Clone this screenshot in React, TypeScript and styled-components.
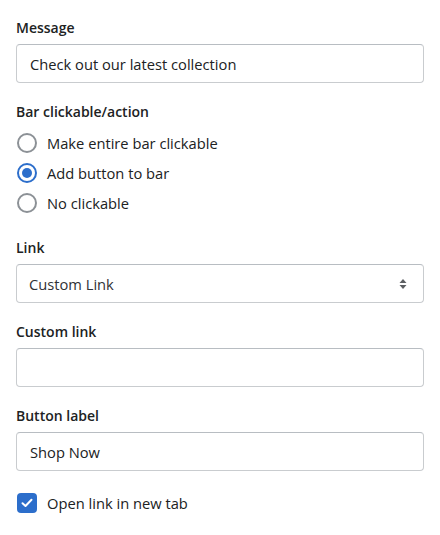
import { createGlobalStyle, styled } from 'styled-components';

const GlobalStyle = createGlobalStyle`
  body {
    margin: 0;
    background: #ffffff;
    font-family: 'Open Sans', 'Noto Sans', sans-serif;
    color: #202223;
  }
  * {
    box-sizing: border-box;
  }
`;

const radioOptions = ['Make entire bar clickable', 'Add button to bar', 'No clickable'];

const App = () => {
  return (
    <>
      <GlobalStyle />
      <Form>
        <Field>
          <Label>Message</Label>
          <TextInput type="text" defaultValue="Check out our latest collection" />
        </Field>

        <Field>
          <Label>Bar clickable/action</Label>
          <RadioList>
            {radioOptions.map((option, i) => (
              <RadioRow key={option}>
                <RadioCircle $checked={i === 1} />
                <span>{option}</span>
              </RadioRow>
            ))}
          </RadioList>
        </Field>

        <Field>
          <Label>Link</Label>
          <SelectBox>
            <span>Custom Link</span>
            <svg width="10" height="14" viewBox="0 0 10 14">
              <path d="M5 2 L8.5 6 L1.5 6 Z" fill="#5c5f62" />
              <path d="M5 12 L8.5 8 L1.5 8 Z" fill="#5c5f62" />
            </svg>
          </SelectBox>
        </Field>

        <Field>
          <Label>Custom link</Label>
          <TextInput type="text" defaultValue="" />
        </Field>

        <Field>
          <Label>Button label</Label>
          <TextInput type="text" defaultValue="Shop Now" />
        </Field>

        <CheckRow>
          <CheckBox>
            <svg width="12" height="10" viewBox="0 0 12 10">
              <path d="M1.5 5.2 L4.5 8 L10.5 1.8" stroke="#ffffff" strokeWidth="2" fill="none" strokeLinecap="round" strokeLinejoin="round" />
            </svg>
          </CheckBox>
          <span>Open link in new tab</span>
        </CheckRow>
      </Form>
    </>
  );
};

export default App;

const Form = styled.div`
  display: flex;
  flex-direction: column;
  gap: 19px;
  padding: 18px 16px;
  width: 440px;
`;

const Field = styled.div`
  display: flex;
  flex-direction: column;
  gap: 6px;
`;

const Label = styled.div`
  font-size: 14px;
  font-weight: 600;
  line-height: 20px;
`;

const TextInput = styled.input`
  width: 100%;
  height: 39px;
  padding: 0 13px;
  border: 1px solid #c9cccf;
  border-top-color: #b8bdc2;
  border-radius: 4px;
  font-family: inherit;
  font-size: 14.7px;
  color: #202223;
  background: #ffffff;

  &:focus {
    outline: none;
  }
`;

const SelectBox = styled.div`
  display: flex;
  align-items: center;
  justify-content: space-between;
  height: 39px;
  padding: 0 15px 0 12px;
  border: 1px solid #c9cccf;
  border-top-color: #b8bdc2;
  border-radius: 4px;
  font-size: 14.7px;
  color: #303236;
`;

const RadioList = styled.div`
  display: flex;
  flex-direction: column;
  padding-bottom: 1px;
`;

const RadioRow = styled.div`
  display: flex;
  align-items: center;
  gap: 10px;
  height: 30px;
  padding-left: 1px;
  font-size: 14.7px;
`;

const RadioCircle = styled.span<{ $checked: boolean }>`
  position: relative;
  flex: none;
  width: 20px;
  height: 20px;
  border-radius: 50%;
  border: 2px solid ${(p) => (p.$checked ? '#2c6ecb' : '#8c9196')};

  &::after {
    content: '';
    display: ${(p) => (p.$checked ? 'block' : 'none')};
    position: absolute;
    inset: 3px;
    border-radius: 50%;
    background: #2c6ecb;
  }
`;

const CheckRow = styled.div`
  display: flex;
  align-items: center;
  gap: 10px;
  height: 26px;
  padding-left: 1px;
  font-size: 14.7px;
`;

const CheckBox = styled.span`
  display: flex;
  align-items: center;
  justify-content: center;
  flex: none;
  width: 20px;
  height: 20px;
  border-radius: 4px;
  background: #2c6ecb;
`;
